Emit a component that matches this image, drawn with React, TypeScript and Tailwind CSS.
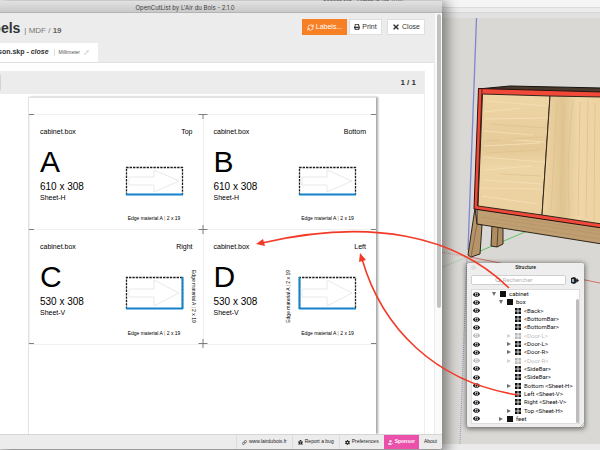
import { FaBug, FaCog, FaEye, FaHandHoldingHeart, FaPrint, FaTimes } from "react-icons/fa";
import { Link, Pencil, RefreshCw, Search } from "lucide-react";

interface Label {
  letter: string;
  name: string;
  size: string;
  sheet: string;
  side?: "left" | "right";
}

interface TreeItem {
  name: string;
  depth: number;
  arrow?: "open" | "closed";
  solid?: boolean;
  faded?: boolean;
}

const labels: Label[] = [
  { letter: "A", name: "Top", size: "610 x 308", sheet: "Sheet-H" },
  { letter: "B", name: "Bottom", size: "610 x 308", sheet: "Sheet-H" },
  { letter: "C", name: "Right", size: "530 x 308", sheet: "Sheet-V", side: "right" },
  { letter: "D", name: "Left", size: "530 x 308", sheet: "Sheet-V", side: "left" },
];

const tree: TreeItem[] = [
  { name: "cabinet", depth: 0, arrow: "open", solid: true },
  { name: "box", depth: 1, arrow: "open", solid: true },
  { name: "<Back>", depth: 2 },
  { name: "<BottomBar>", depth: 2 },
  { name: "<BottomBar>", depth: 2 },
  { name: "<Door-L>", depth: 2, arrow: "closed", faded: true },
  { name: "<Door-L>", depth: 2, arrow: "closed" },
  { name: "<Door-R>", depth: 2, arrow: "closed" },
  { name: "<Door-R>", depth: 2, arrow: "closed", faded: true },
  { name: "<SideBar>", depth: 2 },
  { name: "<SideBar>", depth: 2 },
  { name: "Bottom <Sheet-H>", depth: 2, arrow: "closed" },
  { name: "Left <Sheet-V>", depth: 2 },
  { name: "Right <Sheet-V>", depth: 2 },
  { name: "Top <Sheet-H>", depth: 2, arrow: "closed" },
  { name: "feet", depth: 1, arrow: "closed", solid: true },
];

const indents = ["pl-[12px]", "pl-[19px]", "pl-[27px]"];

function Scene() {
  return (
    <svg
      className="absolute inset-0 h-full w-full"
      viewBox="0 0 600 450"
      preserveAspectRatio="xMaxYMin slice"
      aria-hidden="true"
    >
      <defs>
        <linearGradient id="wood" x1="0" y1="0" x2="0" y2="1">
          <stop offset="0" stopColor="#efd6a6" />
          <stop offset="0.45" stopColor="#e5ca97" />
          <stop offset="0.6" stopColor="#eed5a5" />
          <stop offset="1" stopColor="#ebd09f" />
        </linearGradient>
        <linearGradient id="woodRight" x1="0" y1="0" x2="1" y2="0">
          <stop offset="0" stopColor="#eed4a3" />
          <stop offset="0.35" stopColor="#e0c592" />
          <stop offset="0.6" stopColor="#f0d7a8" />
          <stop offset="1" stopColor="#edd2a1" />
        </linearGradient>
      </defs>
      <path d="M476.500 18L468 250" stroke="#7f86d2" strokeWidth="1.3" />
      <path d="M467 257L460 444" stroke="#8d9bc4" strokeWidth="1" strokeDasharray="1 1" />
      <path d="M478 252L532 229" stroke="#5dc266" strokeWidth="1" />
      <path d="M440 268L470 256" stroke="#7fc287" strokeWidth="0.800" strokeDasharray="1 1" />
      <path d="M440 252L470 257" stroke="#cf7b78" strokeWidth="0.800" strokeDasharray="1 1" />
      <path d="M470 257L600 283" stroke="#cd5750" strokeWidth="0.800" />
      <path d="M492 226L503 228V244L497 247L491 246Z" fill="#b08d60" stroke="#2d261c" />
      <path d="M498 228L497 247" stroke="#2d261c" strokeWidth="0.700" />
      <path d="M475 208L477 224L482 225L480 254L471 257L468 255Z" fill="#b6946a" stroke="#2d261c" />
      <path d="M477 224L471 257" stroke="#806240" strokeWidth="0.800" />
      <path d="M477 209L602 227V244L477 224Z" fill="#bf9f72" stroke="#2d261c" />
      <path d="M482 217L600 234M500 216L600 231M490 222L600 239" stroke="#b19064" strokeWidth="0.600" />
      <path d="M478 89L510 86L602 88V93Z" fill="#4a3a2c" stroke="#161310" />
      <path d="M478.500 88.500L602 92V228L474 209Z" fill="#f0493a" stroke="#2b1410" />
      <path d="M482.500 94L550 96L542 215L478 206Z" fill="url(#wood)" stroke="#30271c" />
      <path d="M550 96L602 97V224L542 215Z" fill="url(#woodRight)" stroke="#30271c" />
      <path
        d="M486 101L547 106M484 112L520 108M485 119L546 118M484 131L533 135M500 139L545 142M484 146L540 143M483 157L543 162M484 170L532 166M483 180L542 184M481 188L540 189M482 196L538 204"
        stroke="#f4dfb5"
        strokeWidth="0.900"
        fill="none"
      />
      <path
        d="M490 124L546 128M486 141L542 137M486 153L540 150M500 174L541 176"
        stroke="#dbc08c"
        strokeWidth="0.700"
        fill="none"
      />
      <path
        d="M557 101L551 210M564 103L560 213M573 100Q566 155 569 215M580 102L578 216M588 101L586 218M595 103L594 220"
        stroke="#dcc290"
        strokeWidth="0.800"
        fill="none"
      />
      <path d="M482 89L477.500 206" stroke="#2b1410" strokeWidth="0.800" />
    </svg>
  );
}

function PartDrawing({ side }: { side?: "left" | "right" }) {
  const top = side ? 1 : 6;
  const bottom = side ? 33 : 34;
  const mid = (top + bottom) / 2;
  return (
    <svg className="h-[36px] w-[59px]" viewBox="0 0 59 36" aria-hidden="true">
      <path
        d={`M4 ${mid - 4}H29V${top + 3}L54 ${mid}L29 ${bottom - 3}V${mid + 4}H4Z`}
        fill="none"
        stroke="#e9e9e9"
      />
      <path
        d={`M1.500 ${bottom}V${top + 0.5}H57.500V${bottom}`}
        fill="none"
        stroke="#1c1c1c"
        strokeWidth="1.300"
        strokeDasharray="2.400 1"
      />
      <path d={`M1 ${bottom - 0.5}H58`} stroke="#1583cb" strokeWidth="2" />
      {side && (
        <path
          d={side === "left" ? `M1.500 ${top}V${bottom}` : `M57.500 ${top}V${bottom}`}
          stroke="#1583cb"
          strokeWidth="2"
        />
      )}
    </svg>
  );
}

function EdgeText() {
  return (
    <>
      Edge material A <span className="text-[#b9764a]">|</span> 2 x 19
    </>
  );
}

function LabelCard({ label }: { label: Label }) {
  return (
    <article className="relative h-[115px] border-t border-l border-[#f1f1f1] pt-[12px] pr-[10px] pl-[10px] text-black">
      <div className="flex justify-between text-[7px] leading-[10px]">
        <span>cabinet.box</span>
        <span>{label.name}</span>
      </div>
      <div className="flex justify-between">
        <div>
          <h2 className="mt-[7px] text-[30px] leading-[36px]">{label.letter}</h2>
          <p className="text-[10px] leading-[14px]">{label.size}</p>
          <p className="text-[7px] leading-[8px]">{label.sheet}</p>
        </div>
        <div className="mt-[24px] mr-[9px] flex flex-col items-center">
          <PartDrawing side={label.side} />
          <p className="mt-[17px] text-[5px] leading-[8px]">
            <EdgeText />
          </p>
        </div>
      </div>
      {label.side === "right" && (
        <p className="absolute top-[40px] right-[5px] text-[5px] leading-[8px] [writing-mode:vertical-rl]">
          <EdgeText />
        </p>
      )}
      {label.side === "left" && (
        <p className="absolute top-[40px] right-[84px] rotate-180 text-[5px] leading-[8px] [writing-mode:vertical-rl]">
          <EdgeText />
        </p>
      )}
    </article>
  );
}

function Sheet() {
  return (
    <section className="mr-[48px] ml-[28px] flex-1 border-t border-l border-[#e2e2e2] bg-white pt-[16px] shadow-[2px_0_2px_#a8a8a8]">
      <div className="relative grid grid-cols-2 border-b border-[#f1f1f1]">
        {labels.map((label) => (
          <LabelCard key={label.letter} label={label} />
        ))}
        <svg
          className="absolute inset-0 h-full w-full overflow-visible"
          viewBox="0 0 348 230"
          preserveAspectRatio="none"
          aria-hidden="true"
        >
          <path
            d="M0 0.500H5M343 0.500H348M170 0.500H179M174.500 0V5M0 115.500H5M343 115.500H348M170 115.500H179M174.500 111V120M0 229.500H5M343 229.500H348M170 229.500H179M174.500 225V234"
            stroke="#7d7d7d"
            fill="none"
          />
        </svg>
      </div>
    </section>
  );
}

function LabelsWindow() {
  const button = "flex h-[16px] items-center justify-center gap-[2px] text-[7px]";
  const footerLink = "flex items-center gap-[2px] border-l border-[#dcdcdc] px-[5px]";
  return (
    <main className="absolute top-[1px] right-[158px] bottom-[1px] left-0 flex flex-col overflow-hidden rounded-r-[3px] bg-white shadow-[3px_3px_12px_3px_#00000066]">
      <header className="h-[12px] border-b border-[#b4b4b4] bg-linear-to-b from-[#e2e2e2] to-[#c9c9c9] pr-[72px] text-center font-[Inter,sans-serif] text-[6px] leading-[13px] text-[#3c3c3c]">
        OpenCutList by L'Air du Bois - 2.1.0
      </header>
      <div className="relative flex min-h-0 flex-1">
        <div className="flex min-w-0 flex-1 flex-col">
          <div className="flex h-[50px] flex-col justify-between border-b border-[#e1e1e1] bg-[#ececec]">
            <div className="flex items-start pt-[6px] pr-[9px]">
              <h1 className="-ml-[24px] flex items-baseline gap-[4px] text-[14px] leading-[18px] font-bold whitespace-nowrap text-[#333]">
                Labels
                <span className="text-[8px] font-normal text-[#777]">
                  | MDF / <span className="font-bold text-[#666]">19</span>
                </span>
              </h1>
              <button className={`${button} ml-auto w-[45px] bg-[#f77f24] text-white`}>
                <RefreshCw size={7} strokeWidth={2.5} />
                Labels...
              </button>
              <button className={`${button} ml-[2px] w-[33px] border border-[#dedede] bg-white text-[#333]`}>
                <FaPrint size={6} />
                Print
              </button>
              <button className={`${button} ml-[5px] w-[38px] border border-[#dedede] bg-white text-[#333]`}>
                <FaTimes size={8} />
                Close
              </button>
            </div>
            <div className="flex h-[19px] w-[98px] items-center justify-end gap-[5px] bg-white pr-[9px] whitespace-nowrap">
              <span className="text-[7px] font-bold text-[#333]">
                poisson.skp - <em>close</em>
              </span>
              <span className="flex items-center gap-[4px] border-l border-[#ddd] pl-[4px] text-[5px] leading-[7px] text-[#555]">
                Millimeter
                <Pencil size={5} className="text-[#aaa]" />
              </span>
            </div>
          </div>
          <div className="mt-[8px] mr-[9px] flex flex-1 flex-col border-r border-[#eeeeee]">
            <div className="flex h-[23px] items-center justify-between bg-[#ececec] pr-[8px]">
              <span className="h-[15px] w-px bg-[#d3d3d3]" />
              <span className="text-[8px] font-bold text-[#333]">1 / 1</span>
            </div>
            <div className="flex flex-1 flex-col pt-[3px]">
              <Sheet />
            </div>
          </div>
        </div>
        <div className="w-[8px] border-l border-[#ebebeb] bg-[#fafafa] pt-[1px] pl-[2px]">
          <div className="h-[294px] w-[4px] rounded-full bg-[#c1c1c1]" />
        </div>
      </div>
      <footer className="relative flex h-[15px] justify-end border-t border-[#d5d5d5] bg-[#ececec] text-[5px] text-[#222]">
        <a href="#site" className={footerLink}>
          <Link size={5} strokeWidth={3} />
          www.lairdubois.fr
        </a>
        <a href="#bug" className={footerLink}>
          <FaBug size={5} />
          Report a bug
        </a>
        <a href="#preferences" className={footerLink}>
          <FaCog size={5} />
          Preferences
        </a>
        <a href="#sponsor" className="flex items-center gap-[2px] bg-[#eb51aa] px-[4px] font-bold text-white">
          <FaHandHoldingHeart size={5} />
          Sponsor
        </a>
        <a href="#about" className="flex items-center px-[5px]">
          About
        </a>
      </footer>
    </main>
  );
}

function TreeRow({ item }: { item: TreeItem }) {
  return (
    <li className={`flex items-center ${item.faded ? "opacity-30" : ""}`}>
      <FaEye size={7} className="ml-px shrink-0" />
      <div className={`flex items-center ${indents[item.depth]}`}>
        <span className="w-[8px]">
          {item.arrow && (
            <svg className="size-[4px]" viewBox="0 0 4 4" aria-hidden="true">
              <path d={item.arrow === "open" ? "M0 0H4L2 4Z" : "M0 0L4 2L0 4Z"} fill="#707070" />
            </svg>
          )}
        </span>
        <svg className="mr-[3px] size-[6px]" viewBox="0 0 6 6" aria-hidden="true">
          <path d="M0 0H6V6H0Z" fill="#111" />
          {!item.solid && <path d="M3 0V6M0 3H6" stroke="#fff" strokeWidth="0.800" />}
        </svg>
        <span className="whitespace-nowrap">{item.name}</span>
      </div>
    </li>
  );
}

function StructurePanel() {
  return (
    <aside className="absolute top-[263px] right-[16px] flex h-[164px] w-[117px] flex-col rounded-[2px] bg-[#eeeeee] px-[4px] pb-[3px] font-[Roboto,sans-serif] text-[6px] leading-[8px] text-[#111] shadow-[0_1px_5px_1px_#00000080]">
      <header className="relative h-[12px] text-center text-[5px] leading-[9px] font-medium">
        <span className="absolute top-[2px] left-0 size-[5px] rounded-full bg-[#dedede]" />
        Structure
      </header>
      <div className="mb-[4px] flex h-[10px] items-center justify-between pr-px">
        <label className="flex h-[10px] w-[95px] items-center justify-center gap-[2px] rounded-[2px] border border-[#d0d0d0] bg-white">
          <Search size={6} className="shrink-0 text-[#777]" />
          <input
            aria-label="Rechercher"
            placeholder="Rechercher"
            className="w-[40px] outline-none placeholder:text-[#b5b5b5]"
          />
        </label>
        <button aria-label="Details">
          <svg className="h-[7px] w-[8px]" viewBox="0 0 8 7" aria-hidden="true">
            <path d="M0 1L3 0L5 1V6L3 7L0 6Z" fill="#222" />
            <path d="M1 2H3V5H1Z" fill="#8fb3cf" />
            <path d="M4 2.500H5.500V1L8 3.500L5.500 6V4.500H4Z" fill="#222" />
          </svg>
        </button>
      </div>
      <div className="relative flex min-h-0 flex-1 border border-[#dddddd] bg-white">
        <ul className="grid flex-1 grid-rows-[repeat(16,minmax(0,1fr))]">
          {tree.map((item, i) => (
            <TreeRow key={i} item={item} />
          ))}
        </ul>
        <span className="absolute top-[9px] right-0 bottom-0 w-[3px] rounded-full bg-[#bdbdbd]" />
      </div>
      <svg className="absolute right-0 bottom-0 size-[4px]" viewBox="0 0 4 4" aria-hidden="true">
        <path d="M0 4L4 0M2 4L4 2" stroke="#999" strokeWidth="0.600" />
      </svg>
    </aside>
  );
}

function Arrows() {
  return (
    <svg
      className="pointer-events-none absolute inset-0 h-full w-full"
      viewBox="0 0 600 450"
      preserveAspectRatio="xMaxYMin slice"
      aria-hidden="true"
    >
      <g fill="none" stroke="#f23a26" strokeWidth="1.600">
        <path d="M509 288C455 235 370 218 262 243" />
        <path d="M518 395C435 382 382 328 362 259" />
      </g>
      <g fill="#f23a26">
        <path d="M256 244L263 239L265 246Z" />
        <path d="M360 253L366 260L359 262Z" />
      </g>
    </svg>
  );
}

export default function App() {
  return (
    <div className="relative flex h-screen flex-col overflow-hidden bg-[#d9d8d4] font-['Liberation_Sans',Arial,sans-serif]">
      <div className="h-[8px] border-b border-[#dcdcdc] bg-[#f5f5f5] pr-[197px] text-right font-[Inter,sans-serif] text-[5px] leading-[2px] text-[#555]">
        poisson.skp - SketchUp Pro 2020
      </div>
      <div className="h-[5px] border-b border-[#d6d6d6] bg-[#ebebeb]" />
      <div className="h-[5px] bg-[#e1e1e1]" />
      <div className="mt-auto h-[6px] bg-[#ebebeb]" />
      <Scene />
      <LabelsWindow />
      <StructurePanel />
      <Arrows />
    </div>
  );
}
